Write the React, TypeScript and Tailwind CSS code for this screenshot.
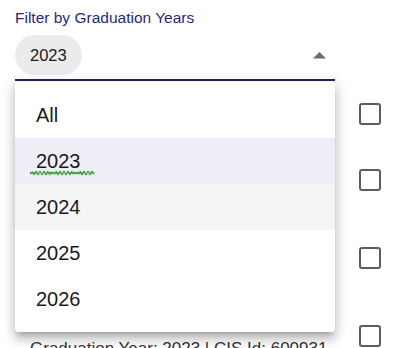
import React from "react";

const years = ["All", "2023", "2024", "2025", "2026"];

const students = [
  { name: "Select All", sub: "" },
  { name: "Madison Taylor", sub: "Graduation Year: 2023 | CIS Id: 600412" },
  { name: "Jordan Whitley", sub: "Graduation Year: 2023 | CIS Id: 600587" },
  { name: "Mark Doyle", sub: "Graduation Year: 2023 | CIS Id: 600931" },
];

const Checkbox = () => (
  <div className="w-[22px] h-[22px] border-2 border-[#5c5c5c] rounded-[3px] bg-white shrink-0" />
);

export default function App() {
  return (
    <div
      className="relative w-[400px] h-[348px] overflow-hidden bg-white"
      style={{ fontFamily: '"Liberation Sans", Arial, sans-serif' }}
    >
      {/* Select field */}
      <div className="pl-[15px]">
        <div className="pt-[9px] text-[15.5px] leading-[18px] text-[#1f2a85]">
          Filter by Graduation Years
        </div>
        <div className="w-[320px] pt-[8px] pb-[4px] border-b-2 border-[#1a237e] flex items-center justify-between">
          <div className="h-[40px] px-[15px] rounded-full bg-[#ebebeb] flex items-center text-[16.5px] text-[#1c1c1c]">
            2023
          </div>
          <svg width="13" height="7" viewBox="0 0 13 7" className="mr-[9px]">
            <path d="M0 6.5 L6.5 0 L13 6.5 Z" fill="#6b6b6b" />
          </svg>
        </div>
      </div>

      {/* Background list */}
      <div className="flex flex-col">
        {students.map((s, i) => (
          <div
            key={s.name}
            className={
              i === 0
                ? "h-[60px] flex items-start justify-between pl-[30px] pr-[19px] pt-[22px]"
                : "h-[78px] flex items-center justify-between pl-[30px] pr-[19px]"
            }
          >
            <div className="flex flex-col text-[17px] text-[#2b2b2b]">
              <span className="leading-[20px]">{s.name}</span>
              {s.sub && <span className="leading-[20px] mt-[5px] text-[#333]">{s.sub}</span>}
            </div>
            <Checkbox />
          </div>
        ))}
      </div>

      {/* Dropdown menu */}
      <div className="absolute left-[15px] top-[81px] w-[320px] bg-white rounded-b-[4px] pt-[11px] pb-[10px] shadow-[0_5px_5px_-3px_rgba(0,0,0,0.2),0_8px_10px_1px_rgba(0,0,0,0.14),0_3px_14px_2px_rgba(0,0,0,0.12)]">
        {years.map((y) => (
          <div
            key={y}
            className={
              "relative h-[46px] pl-[21px] flex items-center text-[20px] text-[#1a1a1a] " +
              (y === "2023" ? "bg-[#eeeff6]" : y === "2024" ? "bg-[#f5f5f5]" : "bg-white")
            }
          >
            {y}
            {y === "2023" && (
              <svg
                width="65"
                height="6"
                viewBox="0 0 65 6"
                className="absolute left-[15px] top-[32px]"
              >
                <path
                  d="M0 3.5 L2 2 L4 4 L6 2 L8 4 L10 2 L12 4 L14 2 L16 4 L18 2 L20 4 L22 2 L24 4 L26 2 L28 4 L30 2 L32 4 L34 2 L36 4 L38 2 L40 4 L42 2 L44 4 L46 2 L48 4 L50 2 L52 4 L54 2 L56 4 L58 2 L60 4 L62 2 L64 3.5"
                  fill="none"
                  stroke="#3a9f35"
                  strokeWidth="2.2"
                  strokeDasharray="2 0.6"
                />
              </svg>
            )}
          </div>
        ))}
      </div>
    </div>
  );
}
